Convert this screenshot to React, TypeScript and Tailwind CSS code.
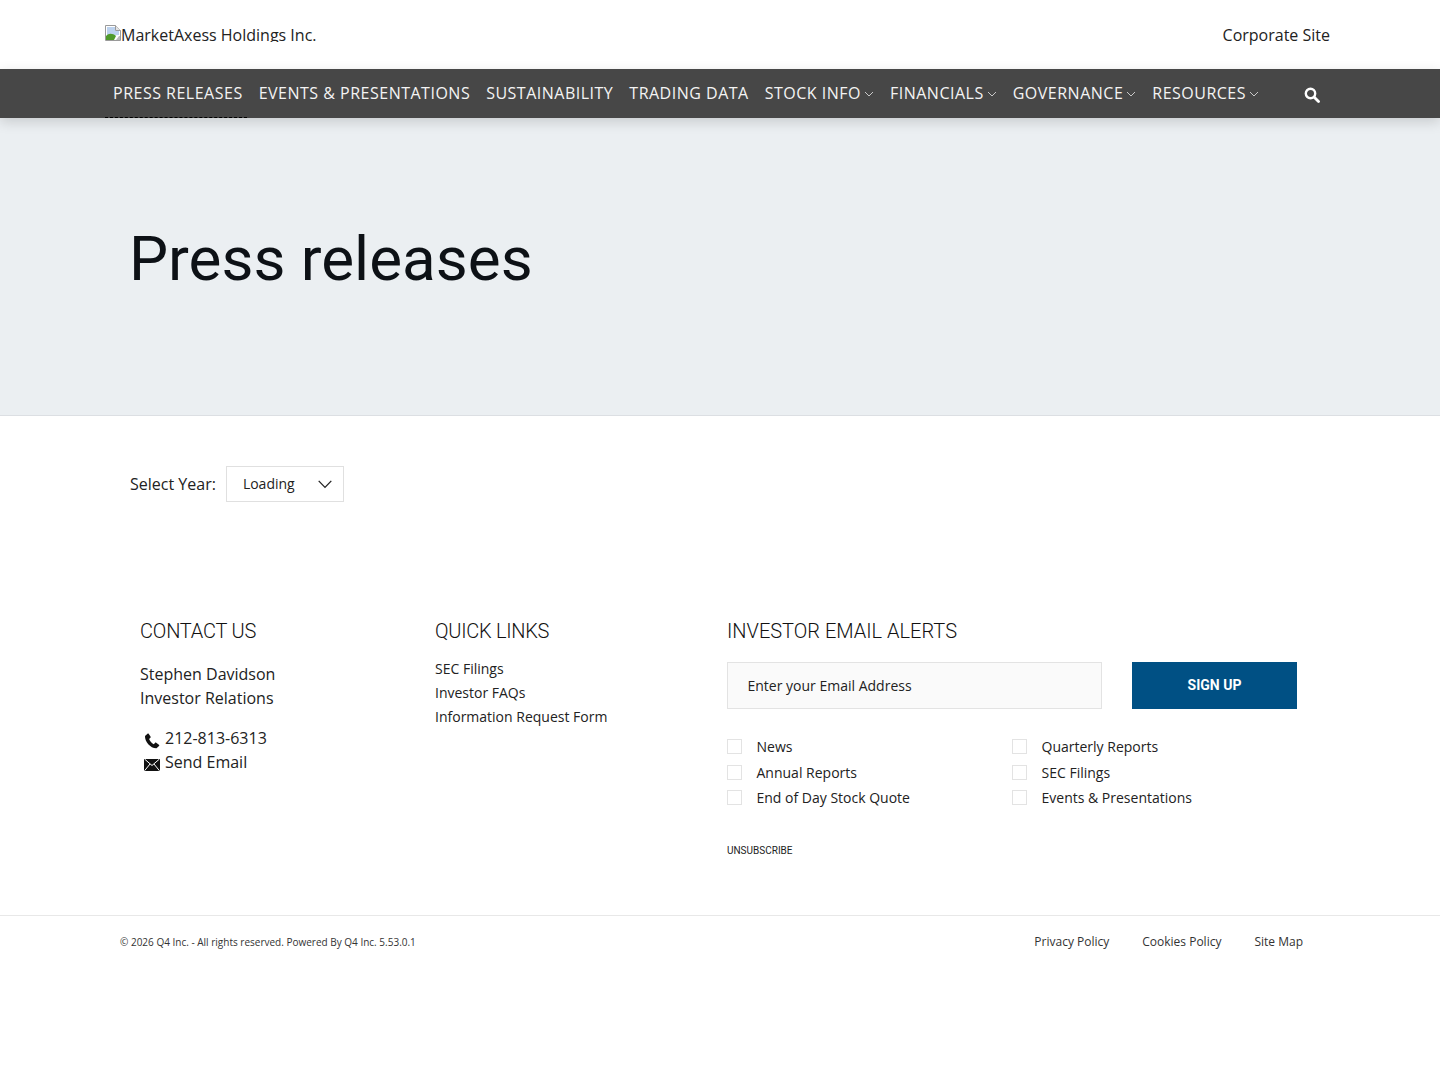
const sans = "font-['Open_Sans',sans-serif]";
const head = "font-['Roboto',sans-serif]";

const navItems = [
  { label: "PRESS RELEASES" },
  { label: "EVENTS & PRESENTATIONS" },
  { label: "SUSTAINABILITY" },
  { label: "TRADING DATA" },
  { label: "STOCK INFO", caret: true },
  { label: "FINANCIALS", caret: true },
  { label: "GOVERNANCE", caret: true },
  { label: "RESOURCES", caret: true },
];

const alertsLeft = ["News", "Annual Reports", "End of Day Stock Quote"];
const alertsRight = ["Quarterly Reports", "SEC Filings", "Events & Presentations"];

function BrokenImage() {
  return (
    <svg width="16" height="16" viewBox="0 0 16 16" className="shrink-0">
      <path d="M0.5 0.5H10.5L15.5 5.5V15.5H0.5Z" fill="#fff" stroke="#9a9a9a" />
      <path d="M2 2H10V6H14V10L2 11Z" fill="#bcd2ee" />
      <path d="M10.5 0.5V5.5H15.5" fill="#e4e4e4" stroke="#9a9a9a" />
      <path d="M1 15V11C4 7.5 8 8.5 11 11L9 15Z" fill="#4f9a2a" />
      <path d="M11 15L14 11H15V15Z" fill="#b9b9b9" />
    </svg>
  );
}

function AlertCheck({ label }: { label: string }) {
  return (
    <label className="flex h-[25.5px] items-center">
      <span className="h-[15px] w-[15px] border border-[#e3e3e3] bg-white" />
      <span className="ml-[14.5px] text-[14px] text-[#222]">{label}</span>
    </label>
  );
}

export default function App() {
  return (
    <div className={`${sans} min-h-[1080px] bg-white text-[#1a1a1a]`}>
      {/* top header */}
      <header className="flex h-[69px] items-start justify-between pl-[105px] pr-[110px]">
        <div className="mt-[25px] flex h-[17px] items-start overflow-hidden text-[16px] leading-[20px] text-[#222]">
          <BrokenImage />
          <span>MarketAxess Holdings Inc.</span>
        </div>
        <a className="mt-[24px] text-[16px] leading-[22px] text-[#222]">Corporate Site</a>
      </header>

      {/* nav */}
      <nav className="relative z-10 flex h-[49px] items-start bg-[#474747] pl-[105px] shadow-[0_4px_12px_rgba(0,0,0,0.15)]">
        {navItems.map((item) => (
          <a
            key={item.label}
            className="flex h-[49px] shrink-0 items-center whitespace-nowrap px-[8px] pb-[1px] text-[16px] tracking-[0.5px] text-[#f4f4f4]"
          >
            {item.label}
            {item.caret && (
              <svg width="10" height="6" viewBox="0 0 10 6" className="ml-[3px] mt-[2px]">
                <path d="M1 1L5 5L9 1" fill="none" stroke="#c8c8c8" strokeWidth="1" />
              </svg>
            )}
          </a>
        ))}
        <span className="absolute bottom-0 left-[105px] w-[142px] border-b border-dashed border-black" />
        <svg width="16" height="16" viewBox="0 0 16 16" className="ml-[37px] mt-[18px]">
          <circle cx="6.5" cy="6.5" r="4.7" fill="none" stroke="#fff" strokeWidth="2.4" />
          <path d="M10 10L14.5 14.5" stroke="#fff" strokeWidth="2.8" strokeLinecap="round" />
        </svg>
      </nav>

      {/* hero */}
      <section className="flex h-[298px] items-start border-b border-[#dcdfe3] bg-[#ebeff2] pl-[129px]">
        <h1 className={`${head} mt-[101px] text-[62px] font-normal leading-[80px] text-[#0d1116]`}>
          Press releases
        </h1>
      </section>

      {/* year select */}
      <div className="flex items-center pl-[130px] pt-[50px]">
        <span className="text-[16px] text-[#222]">Select Year:</span>
        <div className="ml-[10px] flex h-[36px] w-[118px] items-center justify-between border border-[#e0e0e0] pb-[1px] pl-[16px] pr-[11px] text-[14px] text-[#222]">
          Loading
          <svg width="14" height="9" viewBox="0 0 14 9" className="mt-[2px]">
            <path d="M0.7 0.9L7 7.4L13.3 0.9" fill="none" stroke="#222" strokeWidth="1.3" />
          </svg>
        </div>
      </div>

      {/* footer columns */}
      <footer className="flex pt-[115px]">
        <div className="ml-[140px] w-[295px]">
          <h2 className={`${head} text-[20px] font-light leading-[29px] tracking-[-0.2px] text-[#111]`}>CONTACT US</h2>
          <p className="mt-[16px] text-[16px] leading-[24px] text-[#222]">Stephen Davidson<br />Investor Relations</p>
          <div className="mt-[16px] text-[16px] leading-[24px] text-[#222]">
            <div className="flex items-center">
              <svg width="16" height="16" viewBox="0 0 16 16" className="ml-[4px] mr-[5px] mt-[6px]">
                <path d="M3.5 0.8L1 3C0.6 8.5 6.5 15.5 12.5 15.3L15 13C15.4 12.6 15.3 12 14.9 11.7L12.2 9.8C11.8 9.5 11.3 9.6 11 9.9L9.7 11.2C7.7 10.2 5.9 8 5.1 6L6.4 4.7C6.8 4.3 6.8 3.8 6.5 3.4L4.8 0.9C4.5 0.5 3.9 0.4 3.5 0.8Z" fill="#111" />
              </svg>
              212-813-6313
            </div>
            <div className="flex items-center">
              <svg width="16" height="13" viewBox="0 0 16 13" className="ml-[4px] mr-[5px] mt-[5px]">
                <path d="M0 1H16V13H0Z" fill="#111" />
                <path d="M0.5 1L8 7.5L15.5 1M0.5 12.8L6 6M15.5 12.8L10 6" fill="none" stroke="#fff" strokeWidth="1" />
              </svg>
              Send Email
            </div>
          </div>
        </div>

        <div className="w-[292px]">
          <h2 className={`${head} text-[20px] font-light leading-[29px] tracking-[-0.27px] text-[#111]`}>QUICK LINKS</h2>
          <ul className="mt-[11px] text-[14px] leading-[24px] text-[#222]">
            <li>SEC Filings</li>
            <li>Investor FAQs</li>
            <li>Information Request Form</li>
          </ul>
        </div>

        <div className="w-[570px]">
          <h2 className={`${head} text-[20px] font-light leading-[29px] text-[#111]`}>INVESTOR EMAIL ALERTS</h2>
          <div className="mt-[16px] flex gap-[30px]">
            <div className="flex h-[47px] w-[375px] items-center border border-[#e3e3e3] bg-[#fafafa] pl-[19.5px] text-[14px] text-[#222]">
              Enter your Email Address
            </div>
            <button className={`${head} h-[47px] w-[165px] bg-[#005084] text-[14px] font-bold text-white`}>SIGN UP</button>
          </div>
          <div className="mt-[25px] flex">
            <div className="w-[285px]">
              {alertsLeft.map((a) => <AlertCheck key={a} label={a} />)}
            </div>
            <div>
              {alertsRight.map((a) => <AlertCheck key={a} label={a} />)}
            </div>
          </div>
          <div className={`${head} mt-[32px] text-[10px] leading-[16px] text-[#222]`}>UNSUBSCRIBE</div>
        </div>
      </footer>

      {/* bottom bar */}
      <div className="mt-[56px] flex items-start justify-between border-t border-[#e8e8e8] pl-[120px] pr-[137px] pt-[19px]">
        <span className="text-[10px] leading-[15px] text-[#333]">© 2026 Q4 Inc. - All rights reserved. Powered By Q4 Inc. 5.53.0.1</span>
        <div className="-mt-[1px] flex gap-[33px] text-[12px] leading-[15px] text-[#333]">
          <a>Privacy Policy</a>
          <a>Cookies Policy</a>
          <a>Site Map</a>
        </div>
      </div>
    </div>
  );
}
